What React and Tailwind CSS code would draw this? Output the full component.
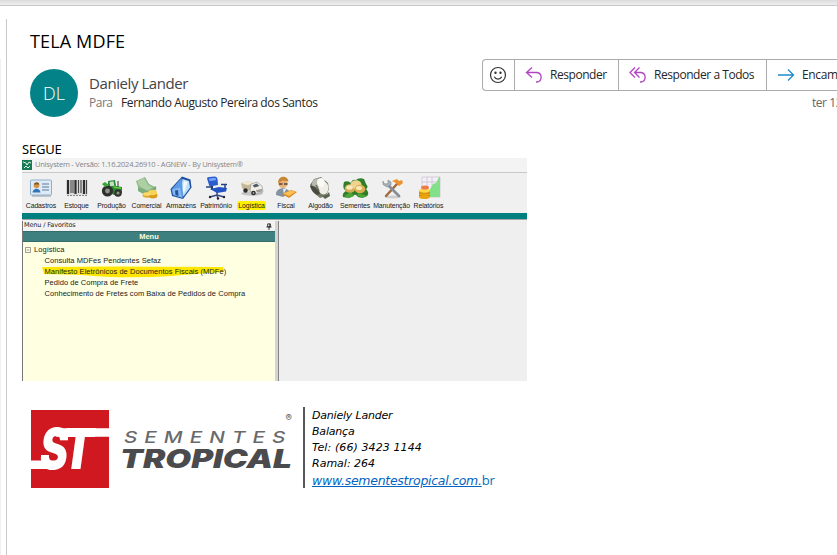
import React from 'react';

const Icon = ({ children }) => (
  <svg viewBox="0 0 24 24" className="block h-6 w-6">{children}</svg>
);

const icons = {
  card: (
    <Icon>
      <rect x="1.5" y="4" width="21" height="15" rx="1" fill="#dfeaf6" stroke="#8fb0cd" />
      <path d="M3 19h19v2H3z" fill="#8d9cab" opacity=".5" />
      <circle cx="7.5" cy="9.5" r="2.800" fill="#d3944a" />
      <path d="M4.8 8.500c1-3 5-3 5.600 0z" fill="#7a5a25" />
      <path d="M3.5 16.500c.5-5 7.500-5 8 0z" fill="#2f74b8" />
      <path d="M13 8h7M13 11h7M13 14h7" stroke="#5b7c9e" strokeWidth="1.200" />
    </Icon>
  ),
  barcode: (
    <Icon>
      <path d="M1.500 4h21v15h-21z" fill="#dcdcdc" />
      <path d="M3 4v14M10.500 4v14M19 4v14" stroke="#2c2c2c" strokeWidth="2.200" />
      <path d="M6 4v13M8 4v13M13.500 4v13M16 4v13M21.500 4v14" stroke="#444" strokeWidth="1.100" />
      <path d="M2 19.500h20" stroke="#888" strokeDasharray="2 1" />
    </Icon>
  ),
  tractor: (
    <Icon>
      <path d="M8 5l7-1 1 6 6 1v6l-8 2-6-3z" fill="#258b2c" />
      <path d="M9.500 6l4-.7.8 4.500-4 .5z" fill="#c9dccb" />
      <path d="M13 10l8 1.500v1.500l-7-1z" fill="#62c747" />
      <path d="M18 5v6" stroke="#333" />
      <circle cx="7.500" cy="15" r="5.600" fill="#2f2f2f" />
      <circle cx="7.500" cy="15" r="2.400" fill="#8b9782" />
      <circle cx="18" cy="17" r="3.800" fill="#333" />
      <circle cx="18" cy="17" r="1.500" fill="#8f9b84" />
      <path d="M2 8l3-2 4 3-4 2z" fill="#3fa13a" />
    </Icon>
  ),
  money: (
    <Icon>
      <path d="M1 5l9-4 4 7 8 4-9 5L3 11z" fill="#8bb886" />
      <path d="M2 5l7-3 4 7 6 3-6 3-9-5z" fill="#acd0a4" />
      <path d="M3 11l9 4 9-5v4l-9 6-9-5z" fill="#7cab7d" />
      <ellipse cx="12" cy="19" rx="4.500" ry="2.800" fill="#e0a92c" />
      <ellipse cx="18" cy="19.500" rx="4.500" ry="3" fill="#d99d20" />
      <ellipse cx="17.500" cy="16.500" rx="4.500" ry="2.700" fill="#f6d35a" />
      <ellipse cx="12" cy="18" rx="4" ry="1.800" fill="#f8db6c" />
    </Icon>
  ),
  barn: (
    <Icon>
      <path d="M1.500 13L13 .5l8.500 3 1 8L14 23 3 20z" fill="#1d4f9e" />
      <path d="M13.500 3L20 5l1 6.500-6.500 9-2.500-7z" fill="#bfe0fb" />
      <path d="M15 5l3.500 1L15 17l-2-4z" fill="#f1f9ff" />
      <path d="M2.500 13.500L12.500 2l1 9 .5 11-10-3z" fill="#5d9be6" />
      <path d="M3.500 13.500L11 11.500l2 10-8.500-2.500z" fill="#86b7f0" />
      <path d="M6 14.500l3-.5.500 6-3-1z" fill="#22539c" />
    </Icon>
  ),
  chair: (
    <Icon>
      <path d="M3 2.500Q3 1 5 1l6-.5Q13 .5 13.500 3l.5 6-8.500 1.500z" fill="#2a5cce" />
      <path d="M5 2.500l6.500-.7.500 2.500-6.500.8z" fill="#7ba4fa" />
      <path d="M8 10v4" stroke="#2b3860" strokeWidth="2" />
      <path d="M6 13l9-2 8 1-1 3.500-9 1.500z" fill="#2253c4" />
      <path d="M17 8.500h6M21 8.500v4M2 11h5" stroke="#28447f" strokeWidth="1.500" />
      <path d="M13 16v3M13 19l-7 2M13 19l7 2M13 19l1 4" stroke="#344a80" strokeWidth="1.400" />
      <circle cx="6" cy="21" r="1.200" fill="#223" /><circle cx="20" cy="21" r="1.200" fill="#223" /><circle cx="14" cy="22.500" r="1.200" fill="#223" />
    </Icon>
  ),
  truck: (
    <Icon>
      <ellipse cx="12" cy="17.500" rx="11" ry="2.200" fill="#c4c4c4" />
      <path d="M1 7l8-2 5 3v6l-8 1-4-3z" fill="#c3b997" />
      <path d="M1 7l8-2 5 3-7 1z" fill="#f1ead3" />
      <path d="M11 8l6-2 5 4 1 6-9 2-4-3z" fill="#f1efe8" stroke="#8a8a86" strokeWidth=".6" />
      <path d="M12.500 9.500l4-2 3 2.500-5 1.500z" fill="#4c5b66" />
      <path d="M16 14l6-1v2.500l-5 1z" fill="#9a9b98" />
      <circle cx="5.500" cy="14.500" r="2.200" fill="#2c2c2c" /><circle cx="13.500" cy="17" r="2.300" fill="#2c2c2c" />
      <circle cx="13.500" cy="17" r=".9" fill="#aaa" />
    </Icon>
  ),
  clerk: (
    <Icon>
      <circle cx="9" cy="7.500" r="4.700" fill="#e9b378" />
      <path d="M4 7c0-8 10-8 10.500-1.500L9 4.500z" fill="#c58738" />
      <path d="M5 8h3.500M10 8h3.500" stroke="#4d4540" strokeWidth="1.400" />
      <path d="M2 19c-1-8 12-9 14-2l-7 4z" fill="#8492a2" />
      <path d="M9 13l1 5 2-5z" fill="#eee" />
      <path d="M8 18l9-4 6 2-8 6z" fill="#d98c22" />
      <path d="M9.500 17.500l7.500-3 4.500 1.500-6.500 4z" fill="#ffc052" />
    </Icon>
  ),
  cotton: (
    <Icon>
      <path d="M1 9l4-6 7-2 7 6 1 6-3 7-6 2-6-5z" fill="#767a6b" />
      <ellipse cx="8.500" cy="8" rx="5.500" ry="5.500" fill="#b9bbb0" />
      <ellipse cx="14.500" cy="12" rx="5" ry="6.500" fill="#efede5" />
      <ellipse cx="12" cy="6.500" rx="4" ry="4.500" fill="#fafaf5" />
      <path d="M1 10c4-1 8 2 10 8l-3 1c-4-2-6-5-7-9z" fill="#484d3f" />
      <path d="M7 9l3 6" stroke="#6b6e60" strokeWidth="1.500" />
      <path d="M12 19c3 2 6 0 8-3l1 4-5 3z" fill="#5b644f" />
    </Icon>
  ),
  seeds: (
    <svg viewBox="0 0 28 24" className="block h-6 w-7">
      <path d="M3 6q4-2 7 1 1-4 5-3 3-3 8-1 1 2 2 5 3 3 0 5 4 4 1 7-4 3-9 1-2-3-4-2-3 4-11 2-1-4 3-6-4-2-2-9z" fill="#2f7e28" />
      <path d="M3 20l7-4 3 4-5 2zM18 17l8 3-5 2-5-3z" fill="#4ba538" />
      <ellipse cx="9" cy="12.500" rx="5.300" ry="4.300" fill="#d6ac55" />
      <ellipse cx="15" cy="8.500" rx="5.500" ry="4.300" fill="#eed48e" />
      <ellipse cx="19" cy="13" rx="5.300" ry="4.300" fill="#dcae51" />
      <ellipse cx="8.500" cy="11.500" rx="3.200" ry="2.200" fill="#f7e9bb" /><ellipse cx="18" cy="12" rx="3" ry="2" fill="#f8e8b8" />
    </svg>
  ),
  tools: (
    <Icon>
      <ellipse cx="13" cy="21" rx="8" ry="1.500" fill="#ccc" />
      <path d="M17 8L6 20" stroke="#a06a3a" strokeWidth="2.400" strokeLinecap="round" />
      <path d="M12 5l5-2 2 2 3-1 1 3-4 3-3-3z" fill="#ef922e" />
      <path d="M8 9l11 11" stroke="#858e97" strokeWidth="2.600" strokeLinecap="round" />
      <path d="M3 5v3.500l4 2.500 4-2V6L8 4v3.500L6 8 4 7.500z" fill="#aab2b9" stroke="#7d868e" strokeWidth=".6" />
    </Icon>
  ),
  reports: (
    <Icon>
      <path d="M5 1h18v20H9L5 14z" fill="#f4eff8" stroke="#c6c0cb" strokeWidth=".7" />
      <path d="M10 1v12M15 1v10M5 6h17" stroke="#cfc8d6" />
      <path d="M12 15l4-7 3-1 3-6h1v20H12z" fill="#82e088" />
      <path d="M2 15h11v6H2z" fill="#e9a40e" />
      <path d="M2 17h11M2 19.500h11" stroke="#b97f0c" strokeWidth=".8" />
      <ellipse cx="7.500" cy="21" rx="5.500" ry="2" fill="#e9a40e" /><ellipse cx="7.500" cy="14.500" rx="5.500" ry="2.200" fill="#ffd849" />
      <ellipse cx="8" cy="11.500" rx="4" ry="2" fill="#ec7b4a" />
    </Icon>
  ),
};

const tools = [
  ['Cadastros', 'card', 'w-[38px]'],
  ['Estoque', 'barcode', 'w-[33px]'],
  ['Produção', 'tractor', 'w-[37px]'],
  ['Comercial', 'money', 'w-[33px]'],
  ['Armazéns', 'barn', 'w-[36px]'],
  ['Patrimônio', 'chair', 'w-[34px]'],
  ['Logística', 'truck', 'w-[37px]'],
  ['Fiscal', 'clerk', 'w-[32px]'],
  ['Algodão', 'cotton', 'w-[37px]'],
  ['Sementes', 'seeds', 'w-[32px]'],
  ['Manutenção', 'tools', 'w-[41px]'],
  ['Relatórios', 'reports', 'w-[33px]'],
];

function Actions() {
  return (
    <div className="flex h-8 w-[375px] shrink-0 rounded-l-[4px] border border-r-0 border-[#ababab] text-[12px] text-[#262626]">
      <div className="flex w-8 shrink-0 items-center justify-center border-r border-[#ababab] pr-px">
        <svg viewBox="0 0 18 18" className="h-[18px] w-[18px]" fill="none" stroke="#333" strokeWidth="1.200">
          <circle cx="9" cy="9" r="7.500" />
          <path d="M5.300 10.800c1.500 3 5.900 3 7.400 0" />
          <circle cx="6.500" cy="6.800" r=".6" fill="#333" /><circle cx="11.500" cy="6.800" r=".6" fill="#333" />
        </svg>
      </div>
      <div className="flex w-[104px] shrink-0 items-center border-r border-[#ababab] pl-[10px]">
        <svg viewBox="0 0 18 18" className="mr-[7px] h-[18px] w-[18px] shrink-0" fill="none" stroke="#b146c2" strokeWidth="1.300">
          <path d="M7 1.500L1.500 6.500 7 11.500M1.500 6.500H12a4.800 4.800 0 0 1 0 9.500h-1" />
        </svg>
        <span className="whitespace-nowrap tracking-[-0.45px]">Responder</span>
      </div>
      <div className="flex w-[148px] shrink-0 items-center border-r border-[#ababab] pl-[10px]">
        <svg viewBox="0 0 18 18" className="mr-[7px] h-[18px] w-[18px] shrink-0" fill="none" stroke="#b146c2" strokeWidth="1.300">
          <path d="M6 1.500L1 6.500l5 5M10.500 1.500l-5 5 5 5M5.500 6.500H12a4.800 4.800 0 0 1 0 9.500h-1" />
        </svg>
        <span className="whitespace-nowrap tracking-[-0.45px]">Responder a Todos</span>
      </div>
      <div className="flex shrink-0 items-center pl-[10px]">
        <svg viewBox="0 0 18 18" className="mr-[7px] h-[18px] w-[18px] shrink-0" fill="none" stroke="#1e8bcd" strokeWidth="1.300">
          <path d="M1 9h15M11 3.500L16.500 9 11 14.500" />
        </svg>
        <span className="whitespace-nowrap tracking-[-0.35px]">Encaminhar</span>
      </div>
    </div>
  );
}

function Unisystem() {
  return (
    <div className="flex h-[223px] w-[505px] flex-col overflow-hidden bg-[#f0f0f0] font-['Liberation_Sans',sans-serif]">
      <div className="flex h-[14px] shrink-0 items-center bg-[#f3f3f3]">
        <svg viewBox="0 0 10 10" className="h-[10px] w-[10px]">
          <path d="M0 0h10v10H0z" fill="#187b55" />
          <path d="M1 2l3 1 1 2 2-3 2 1M2 8l2-2 2 2 2-2" stroke="#d8f5e6" fill="none" />
        </svg>
        <span className="ml-[3px] whitespace-nowrap font-['Open_Sans',sans-serif] text-[7.5px] tracking-[-0.23px] text-[#858585]">
          Unisystem - Versão: 1.16.2024.26910 - AGNEW - By Unisystem®
        </span>
      </div>
      <div className="flex h-[41px] shrink-0 border-t border-[#c9c9c9] pt-[3px]">
        {tools.map(([label, icon, width]) => (
          <div key={label} className={'flex shrink-0 flex-col items-center ' + width}>
            {icons[icon]}
            <span className={'mt-[1px] whitespace-nowrap px-px text-[6.9px] leading-[9px] tracking-[-0.12px] text-[#181818] ' + (label === 'Logística' ? 'rounded-[2px] bg-[#fff200]' : '')}>
              {label}
            </span>
          </div>
        ))}
      </div>
      <div className="h-[7px] shrink-0 border-b border-b-[#a5a5a5] bg-[#007f7f]" />
      <div className="flex min-h-0 flex-1 pt-px">
        <div className="flex w-[253px] flex-col border-l border-[#777] text-[7.5px] text-[#222]">
          <div className="flex h-[10px] shrink-0 items-center justify-between bg-[#f3f3f3] pl-[1px] pr-[3px]">
            <span className="whitespace-nowrap font-['DejaVu_Sans',sans-serif] text-[6.5px] tracking-[-0.12px]">Menu / Favoritos</span>
            <svg viewBox="0 0 6 8" className="h-[7px] w-[6px]" fill="none" stroke="#222">
              <path d="M1.500 1h3v3.500h-3zM0 4.500h6M3 4.500V8M4 1v3" />
            </svg>
          </div>
          <div className="flex h-[11px] shrink-0 items-center justify-center border-y border-[#356d6d] bg-[#3e8080] text-[7.5px] font-bold text-[#fffdd9]">
            Menu
          </div>
          <div className="flex-1 bg-[#ffffe1] pt-[2px] leading-[11px] tracking-[0.05px]">
            <div className="flex items-center pl-[2px]">
              <svg viewBox="0 0 7 7" className="mr-[3px] h-[6px] w-[6px]" fill="none" stroke="#888">
                <path d="M.5.5h6v6h-6zM2 3.500h3" />
              </svg>
              Logística
            </div>
            <div className="pl-[21.5px]">
              <div>Consulta MDFes Pendentes Sefaz</div>
              <div className="relative whitespace-nowrap">
                <svg viewBox="0 0 184 13" className="absolute -left-[3px] top-0 h-[13px] w-[184px]">
                  <path d="M0 1Q60 0 181 1l1 5Q150 8 130 10 80 13 40 9L2 8z" fill="#ffe600" />
                </svg>
                <span className="relative">Manifesto Eletrônicos de Documentos Fiscais (MDFe)</span>
              </div>
              <div>Pedido de Compra de Frete</div>
              <div className="whitespace-nowrap">Conhecimento de Fretes com Baixa de Pedidos de Compra</div>
            </div>
          </div>
        </div>
        <div className="w-[4px] border-r border-[#858585] bg-[#d4d4d4]" />
        <div className="flex-1 bg-[#efefef]" />
      </div>
    </div>
  );
}

function Logo() {
  return (
    <svg viewBox="0 0 273 88" className="h-[88px] w-[273px] shrink-0">
      <path d="M1 5h78v78H1z" fill="#cf1820" />
      <path d="M27 23.300h52v8.500H26zM1 55.500h24l-1 8.500H1z" fill="#fff" />
      <g fill="#fff" fontFamily="Inter, sans-serif" fontWeight="900" fontStyle="italic" fontSize="56">
        <text x="10" y="64" textLength="28" lengthAdjust="spacingAndGlyphs">S</text>
        <text x="32" y="64" textLength="32" lengthAdjust="spacingAndGlyphs">T</text>
      </g>
      <text transform="translate(94 38.300) scale(1.250 1)" fill="#6a6a6c" fontFamily="Inter, sans-serif" fontWeight="500" fontStyle="italic" fontSize="16.500" textLength="129">SEMENTES</text>
      <text x="90" y="62.800" fill="#4b4a4d" fontFamily="Inter, sans-serif" fontWeight="900" fontStyle="italic" fontSize="25.700" textLength="172" lengthAdjust="spacingAndGlyphs">TROPICAL</text>
      <text x="255.500" y="15.500" fill="#666" fontFamily="Inter, sans-serif" fontSize="9.500">®</text>
    </svg>
  );
}

export default function App() {
  return (
    <div className="flex h-[555px] w-[837px] flex-col overflow-hidden bg-white font-['Open_Sans','Noto_Sans',sans-serif]">
      <div className="h-[6px] shrink-0 border-b border-[#c8c8c8] bg-linear-to-b from-[#dcdcdc] to-[#efefef]" />
      <div className="flex min-h-0 flex-1">
        <div className="mt-[53px] w-[1px] shrink-0 bg-[#f0f0f0]" />
        <div className="ml-[5px] mt-[13px] w-[1px] shrink-0 bg-[#c8c8c8]" />
        <div className="flex w-[830px] shrink-0 flex-col pl-[15px]">
          <h1 className="ml-[8px] mt-[22px] whitespace-nowrap text-[18px] leading-[26px] tracking-[0.15px] text-black">TELA MDFE</h1>
          <div className="ml-[8px] flex h-[67px]">
            <div className="mt-[15px] flex h-12 w-12 shrink-0 items-center justify-center rounded-full bg-[#038387] text-[18px] font-light text-white">DL</div>
            <div className="ml-[11px] mt-[19px] w-[393px] shrink-0">
              <div className="text-[15px] leading-[20px] tracking-[-0.42px] text-[#444]">Daniely Lander</div>
              <div className="mt-px flex whitespace-nowrap text-[12px] leading-[18px]">
                <span className="w-[32px] tracking-[-0.5px] text-[#777]">Para</span>
                <span className="tracking-[-0.4px] text-[#262626]">Fernando Augusto Pereira dos Santos</span>
              </div>
            </div>
            <div className="mt-[5px] shrink-0">
              <Actions />
              <div className="ml-[330px] mt-[3px] whitespace-nowrap text-[12px] leading-[18px] tracking-[-0.45px] text-[#666]">ter 12/11</div>
            </div>
          </div>
          <div className="mt-[20px] h-[17px] font-['Noto_Sans',sans-serif] text-[13px] leading-[17px] tracking-[-0.2px] text-black">SEGUE</div>
          <Unisystem />
          <div className="ml-[8px] mt-[24px] flex h-[88px]">
            <Logo />
            <div className="mt-[2px] h-[81px] w-[2px] bg-[#58585a]" />
            <div className="ml-[7px] mt-[3px] whitespace-nowrap font-['DejaVu_Sans',sans-serif] text-[11px] italic leading-[16px] text-black">
              <div className="tracking-[-0.2px]">Daniely Lander</div>
              <div className="tracking-[-0.2px]">Balança</div>
              <div className="tracking-[0.1px]">Tel: (66) 3423 1144</div>
              <div>Ramal: 264</div>
              <div className="flex text-[12.5px] leading-[17px] text-[#0563c1]">
                <span className="tracking-[-0.28px] underline">www.sementestropical.com.</span>
                <span className="font-['Open_Sans',sans-serif] text-[13px] font-medium not-italic tracking-[-0.2px] text-[#0070c0]">br</span>
              </div>
            </div>
          </div>
        </div>
      </div>
    </div>
  );
}
